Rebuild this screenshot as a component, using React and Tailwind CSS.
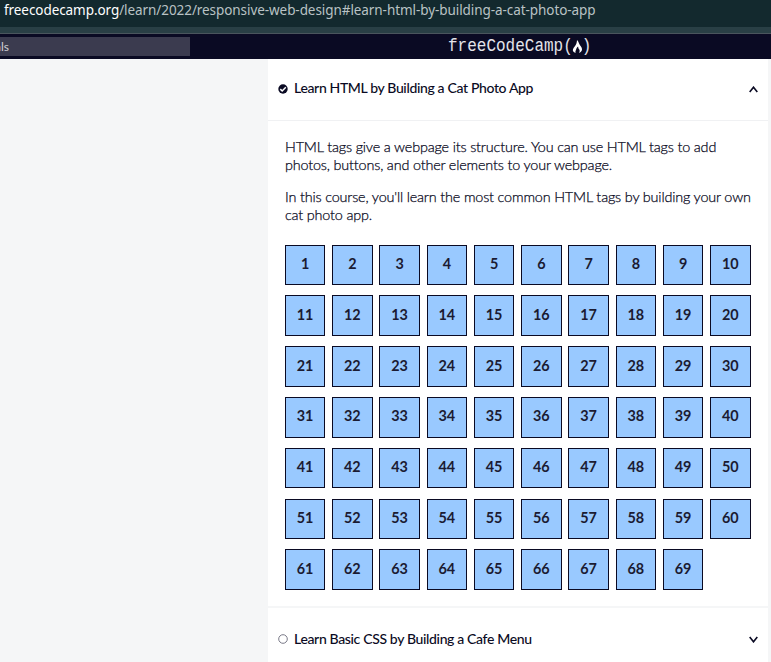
const steps = Array.from({ length: 69 }, (_, i) => i + 1);

function Chevron({ up }) {
  return (
    <svg className="mr-[-1px] h-[7px] w-[9px]" viewBox="0 0 9 7" fill="none" stroke="#0a0a23" strokeWidth="1.6">
      <path d={up ? "M0.7 6 4.5 1.2 8.3 6" : "M0.7 1 4.5 5.8 8.3 1"} />
    </svg>
  );
}

function BlockHeader({ title, done, open }) {
  return (
    <div className={`flex items-center pr-[11px] pl-[10px] ${open ? "h-[61px] pb-[1px]" : "h-[62px]"}`}>
      <svg className="h-[10px] w-[10px]" viewBox="0 0 10 10" fill="none">
        {done ? (
          <>
            <circle cx="5" cy="5" r="4.7" fill="#0a0a23" />
            <path d="M2.3 5.1 4.2 7 7.8 3.3" stroke="#fff" strokeWidth="1.5" />
          </>
        ) : (
          <circle cx="5" cy="5" r="4.3" stroke="#6b6b7b" strokeWidth="0.9" />
        )}
      </svg>
      <h3 className={`ml-[6px] flex-1 text-[14px] leading-5 font-medium tracking-[-0.35px] whitespace-nowrap ${open ? "-mt-[2px]" : ""}`}>{title}</h3>
      <Chevron up={open} />
    </div>
  );
}

export default function App() {
  return (
    <div className="flex h-[662px] w-[771px] flex-col overflow-hidden bg-[#f5f6f7] font-[Lato,sans-serif] text-[#0a0a23]">
      <div className="h-[27px] shrink-0 bg-[#13292e] pl-[4px] font-['Noto_Sans',sans-serif] text-[13.5px] leading-[21px] tracking-[-0.07px] whitespace-nowrap text-[#b9c2c4]">
        <span className="text-white">freecodecamp.org</span>/learn/2022/responsive-web-design#learn-html-by-building-a-cat-photo-app
      </div>
      <div className="h-[7px] shrink-0 border-b border-[#4a555d] bg-[#293f45]" />
      <header className="flex h-[25px] shrink-0 items-center bg-[#0a0a23]">
        <div className="flex h-[19px] w-[190px] items-center bg-[#3b3b4f] text-[12px] text-[#d0d0d5]">
          <span className="-ml-[5px]">als</span>
        </div>
        <div className="ml-[258px] flex items-center font-['Liberation_Mono',monospace] text-[16px] leading-[24px] text-[#e4e4ea]">
          <span className="scale-y-110">freeCodeCamp(</span>
          <svg className="-mx-px h-[13px] w-[11px]" viewBox="0 0 11 13" fill="#fff">
            <path d="M5 0C6.8 1.7 6.9 3.6 8 5.2 9.3 7 10.6 8.6 9.8 10.6 9.3 11.8 8.3 12.6 7 13 8 11.5 7.8 10.1 6.9 9.1 6.2 8.3 6.3 7.6 6.1 6.6 5.1 7.2 4.6 8.5 4.1 9.5 3.6 10.7 3.2 11.8 3.6 13 1.5 12.4.4 11 1 9.3 1.7 7.2 3.7 5.6 4.5 3.2 4.8 2 5 1 5 0Z" />
          </svg>
          <span className="scale-y-110">)</span>
        </div>
      </header>
      <main className="ml-[268px] flex w-[500px] flex-1 flex-col bg-white">
        <BlockHeader title="Learn HTML by Building a Cat Photo App" done open />
        <section className="h-[486px] border-t border-[#f0f1f3] px-[17px] pt-[17px]">
          <div className="text-[14.4px] leading-[18px] font-light tracking-[-0.165px] whitespace-nowrap [-webkit-text-stroke:0.25px_#0a0a23]">
            <p>HTML tags give a webpage its structure. You can use HTML tags to add<br />photos, buttons, and other elements to your webpage.</p>
            <p className="mt-[14px]">In this course, you'll learn the most common HTML tags by building your own<br />cat photo app.</p>
          </div>
          <div className="mt-[20.7px] -ml-[0.1px] grid grid-cols-[repeat(10,40.4px)] gap-x-[6.87px] gap-y-[10.3px]">
            {steps.map((n) => (
              <div key={n} className="flex h-[40.5px] items-center justify-center border border-[#0a0a23] bg-[#99c9ff] pb-[2px] text-[14.4px] leading-5 font-bold text-[#1b1b32]">
                {n}
              </div>
            ))}
          </div>
        </section>
        <div className="h-[2px] shrink-0 bg-[#f5f6f7]" />
        <BlockHeader title="Learn Basic CSS by Building a Cafe Menu" />
      </main>
    </div>
  );
}
